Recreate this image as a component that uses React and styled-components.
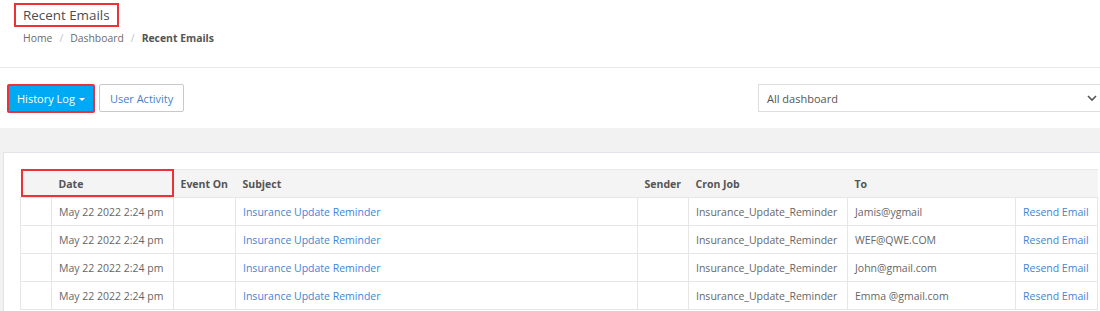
import React from "react";
import styled, { createGlobalStyle } from "styled-components";

const GlobalStyle = createGlobalStyle`
  body {
    margin: 0;
    background: #fff;
    font-family: "Open Sans", "Liberation Sans", sans-serif;
    overflow: hidden;
  }
`;

const Page = styled.div`
  width: 1112px;
`;

const Header = styled.header`
  padding: 3px 0 0 14px;
  height: 64px;
  border-bottom: 1px solid #e8e8e8;
`;

const Title = styled.h1`
  display: inline-block;
  margin: 0;
  padding: 0 7px;
  height: 20px;
  line-height: 20px;
  border: 2px solid #ec3237;
  font-size: 13.4px;
  font-weight: 400;
  color: #4d4d4d;
`;

const Crumbs = styled.nav`
  display: flex;
  gap: 7px;
  margin: 4px 0 0 9px;
  font-size: 10.4px;
  color: #6b6b6b;
`;

const Crumb = styled.span`
  font-weight: ${(p) => (p.active ? 700 : 400)};
  color: ${(p) => (p.active ? "#555" : "#6b6b6b")};
`;

const Sep = styled.span`
  color: #c4c4c4;
`;

const Toolbar = styled.div`
  display: flex;
  align-items: flex-start;
  padding: 16px 6px 0 7px;
  height: 44px;
`;

const Button = styled.button`
  height: ${(p) => (p.primary ? "29px" : "28px")};
  padding: 0 ${(p) => (p.primary ? "8px" : "10px")};
  margin-right: 4px;
  font-family: inherit;
  font-size: 11px;
  border-radius: 2px;
  cursor: pointer;
  display: flex;
  align-items: center;
  gap: 4px;
  background: ${(p) => (p.primary ? "#00a9f4" : "#fff")};
  color: ${(p) => (p.primary ? "#fff" : "#4a7fc9")};
  border: ${(p) => (p.primary ? "2px solid #ec3237" : "1px solid #c9c9c9")};
`;

const Caret = styled.span`
  width: 0;
  height: 0;
  border-left: 3px solid transparent;
  border-right: 3px solid transparent;
  border-top: 3px solid #fff;
  margin-top: 2px;
`;

const Select = styled.div`
  margin-left: auto;
  width: 330px;
  height: 26px;
  border: 1px solid #dedede;
  display: flex;
  align-items: center;
  justify-content: space-between;
  padding: 0 8px;
  font-size: 11px;
  color: #555;
  box-sizing: content-box;
`;

const Content = styled.main`
  background: #f2f2f2;
  padding: 24px 0 0 3px;
`;

const Card = styled.section`
  background: #fff;
  border-top: 1px solid #e1e5ea;
  border-left: 1px solid #e1e5ea;
  padding: 16px 0 0 16px;
  height: 160px;
`;

const Table = styled.table`
  border-collapse: collapse;
  width: 1077px;
  table-layout: fixed;
  font-size: 10.5px;
`;

const Th = styled.th`
  background: #f4f4f4;
  color: #555;
  font-weight: 700;
  text-align: left;
  height: 27px;
  padding: 0 7px;
  border-top: 1px solid #e8e8e8;
  position: relative;
`;

const Marked = styled.div`
  position: absolute;
  z-index: 1;
  left: 0;
  top: -1px;
  width: 153px;
  height: 28px;
  box-sizing: border-box;
  border: 2px solid #ec3237;
  pointer-events: none;
`;

const Td = styled.td`
  height: 27px;
  padding: 0 7px;
  border: 1px solid #e6e6e6;
  color: ${(p) => (p.link ? "#3e86d3" : "#666")};
  white-space: nowrap;
  overflow: hidden;
`;

const cols = [31, 122, 62, 402, 51, 159, 168, 82];

const rows = [
  "Jamis@ygmail",
  "WEF@QWE.COM",
  "John@gmail.com",
  "Emma @gmail.com",
];

export default function App() {
  return (
    <Page>
      <GlobalStyle />
      <Header>
        <Title>Recent Emails</Title>
        <Crumbs>
          <Crumb>Home</Crumb>
          <Sep>/</Sep>
          <Crumb>Dashboard</Crumb>
          <Sep>/</Sep>
          <Crumb active>Recent Emails</Crumb>
        </Crumbs>
      </Header>
      <Toolbar>
        <Button primary>
          History Log <Caret />
        </Button>
        <Button>User Activity</Button>
        <Select>
          <span>All dashboard</span>
          <svg width="10" height="10" viewBox="0 0 10 10">
            <path d="M1 3l4 4 4-4" stroke="#555" strokeWidth="1.6" fill="none" />
          </svg>
        </Select>
      </Toolbar>
      <Content>
        <Card>
          <Table>
            <colgroup>
              {cols.map((w, i) => (
                <col key={i} style={{ width: w }} />
              ))}
            </colgroup>
            <thead>
              <tr>
                <Th>
                  <Marked />
                </Th>
                <Th>Date</Th>
                <Th>Event On</Th>
                <Th>Subject</Th>
                <Th>Sender</Th>
                <Th>Cron Job</Th>
                <Th>To</Th>
                <Th />
              </tr>
            </thead>
            <tbody>
              {rows.map((to) => (
                <tr key={to}>
                  <Td />
                  <Td>May 22 2022 2:24 pm</Td>
                  <Td />
                  <Td link>Insurance Update Reminder</Td>
                  <Td />
                  <Td>Insurance_Update_Reminder</Td>
                  <Td>{to}</Td>
                  <Td link>Resend Email</Td>
                </tr>
              ))}
            </tbody>
          </Table>
        </Card>
      </Content>
    </Page>
  );
}
